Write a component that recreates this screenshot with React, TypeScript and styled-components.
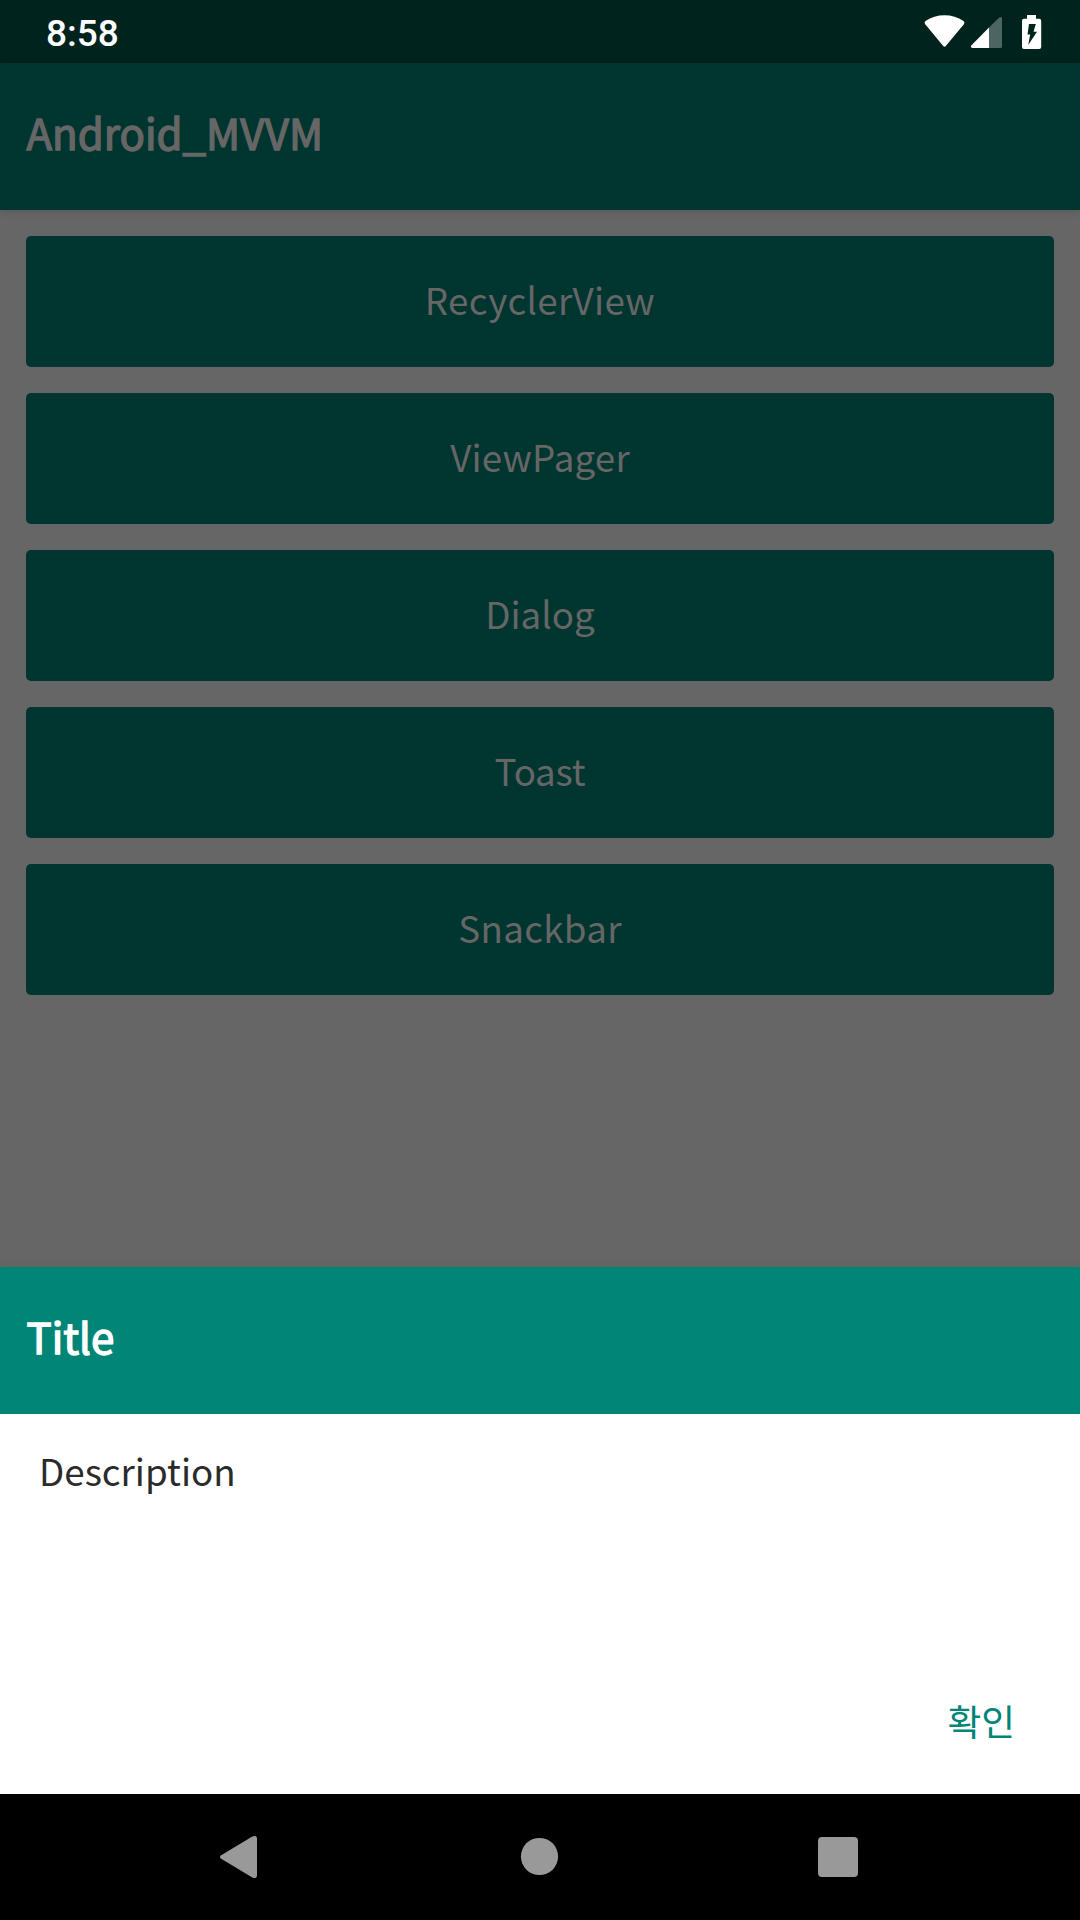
import React from 'react';
import styled, { createGlobalStyle } from 'styled-components';

const GlobalStyle = createGlobalStyle`
  * { box-sizing: border-box; }
  body { margin: 0; background: #000; }
`;

const Screen = styled.div`
  width: 1080px;
  height: 1920px;
  display: flex;
  flex-direction: column;
  overflow: hidden;
  background: #666666;
  font-family: 'Noto Sans CJK KR', 'Noto Sans', sans-serif;
`;

const StatusBar = styled.header`
  flex: none;
  height: 63px;
  display: flex;
  align-items: center;
  justify-content: space-between;
  padding: 3px 38px 0 46px;
  background: #00231e;
  color: #fff;
`;

const Clock = styled.span`
  padding-top: 1px;
  font: 500 37px/44px Roboto, sans-serif;
`;

const StatusIcons = styled.svg`
  display: block;
  margin-top: -3px;
`;

const Bar = styled.div<{ $dimmed?: boolean }>`
  position: relative;
  flex: none;
  height: 147px;
  display: flex;
  align-items: center;
  padding: 0 26px 10px 26.5px;
  background: ${(p) => (p.$dimmed ? '#003530' : '#008577')};
  color: ${(p) => (p.$dimmed ? '#666666' : '#ffffff')};
  box-shadow: ${(p) => (p.$dimmed ? '0 2px 7px rgba(0, 0, 0, 0.12)' : 'none')};
`;

const BarTitle = styled.h1`
  margin: 0;
  font-size: 42px;
  line-height: 66px;
  font-weight: 400;
  -webkit-text-stroke: 1.4px currentColor;
  white-space: nowrap;
`;

const Content = styled.main`
  flex: 1;
  display: flex;
  flex-direction: column;
  gap: 26px;
  padding: 26px;
`;

const MenuButton = styled.button<{ $tracking: number }>`
  flex: none;
  height: 131px;
  padding: 0 0 6px;
  border: 0;
  border-radius: 5px;
  background: #003530;
  color: #666666;
  font-family: inherit;
  font-size: 36.75px;
  line-height: 54px;
  letter-spacing: ${(p) => p.$tracking}px;
`;

const Sheet = styled.section`
  flex: none;
  height: 527px;
  display: flex;
  flex-direction: column;
  background: #fff;
  box-shadow: 0 0 14px rgba(0, 0, 0, 0.06);
`;

const Description = styled.p`
  flex: 1;
  margin: 0;
  padding: 29px 39px;
  font-size: 36.75px;
  line-height: 54px;
  color: #2b2b2b;
`;

const Actions = styled.div`
  display: flex;
  justify-content: flex-end;
  padding: 0 65px 47px;
`;

const Confirm = styled.button`
  padding: 0;
  border: 0;
  background: none;
  color: #008577;
  font-family: inherit;
  font-size: 36.75px;
  line-height: 54px;
`;

const NavBar = styled.nav`
  flex: none;
  height: 126px;
  background: #000;
`;

const MENU = [
  { label: 'RecyclerView', tracking: 0.33 },
  { label: 'ViewPager', tracking: 0.15 },
  { label: 'Dialog', tracking: 0 },
  { label: 'Toast', tracking: -0.2 },
  { label: 'Snackbar', tracking: 0.3 },
];

export default function App() {
  return (
    <Screen>
      <GlobalStyle />
      <StatusBar>
        <Clock>8:58</Clock>
        <StatusIcons width="120" height="36" viewBox="922 13 120 36">
          <path
            d="M925.2 23.2Q923.7 21.4 925.5 20.1Q934 14.2 944.5 14.2Q955 14.2 963.5 20.1Q965.3 21.4 963.9 23.2L945.8 45Q944.5 46.5 943.2 45Z"
            fill="#fff"
          />
          <path d="M989 26.5V47H972.3Q970 46.3 971.5 44.2Z" fill="#fff" />
          <path d="M989 26.5L999.3 16.4Q1002 15 1002 17.5V45.4Q1002 47 1000.4 47H989Z" fill="#4d6562" />
          <path
            fillRule="evenodd"
            d="M1027 14H1036V17.8H1039.2Q1041.2 17.8 1041.2 19.8V46Q1041.2 48 1039.2 48H1024Q1022 48 1022 46V19.8Q1022 17.8 1024 17.8H1027ZM1029 23L1027.5 33.5H1030.2L1028.2 44L1037 30.8H1033.5L1035.8 23Z"
            fill="#fff"
          />
        </StatusIcons>
      </StatusBar>
      <Bar $dimmed>
        <BarTitle>Android_MVVM</BarTitle>
      </Bar>
      <Content>
        {MENU.map(({ label, tracking }) => (
          <MenuButton key={label} $tracking={tracking}>
            {label}
          </MenuButton>
        ))}
      </Content>
      <Sheet>
        <Bar>
          <BarTitle>Title</BarTitle>
        </Bar>
        <Description>Description</Description>
        <Actions>
          <Confirm>확인</Confirm>
        </Actions>
      </Sheet>
      <NavBar>
        <svg width="1080" height="126" viewBox="0 1794 1080 126" fill="#999" display="block">
          <path d="M221.2 1855.2L252.3 1836.5Q257 1834.5 257 1839V1875Q257 1879.5 252.3 1877.5L221.2 1858.8Q218.7 1857 221.2 1855.2Z" />
          <circle cx="539.5" cy="1856.5" r="18.6" />
          <rect x="818" y="1837" width="40" height="40" rx="4" />
        </svg>
      </NavBar>
    </Screen>
  );
}
